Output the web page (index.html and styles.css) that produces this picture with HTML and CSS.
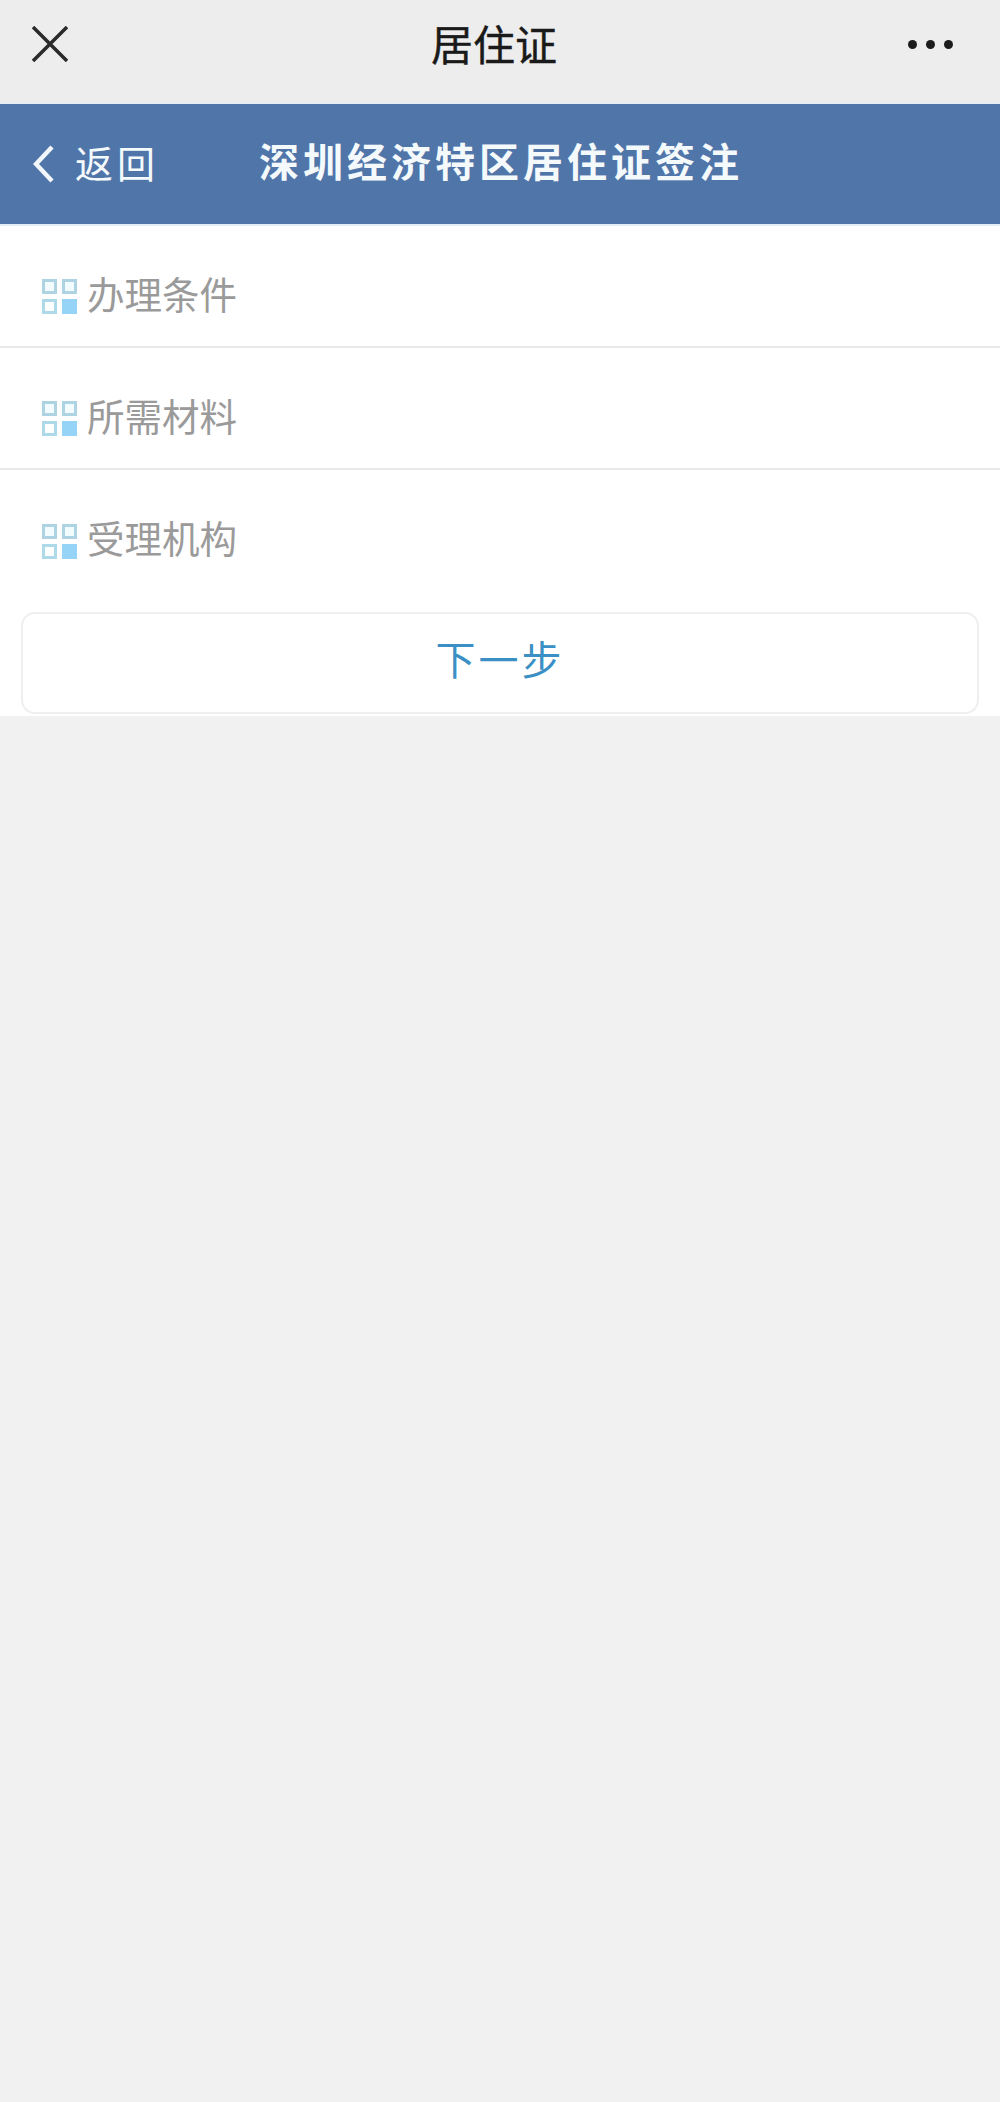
FILE: index.html
```html
<!DOCTYPE html>
<html>
  <head>
    <meta http-equiv="Content-Type" content="text/html;charset=UTF-8">
    <title>居住证</title>
    <link rel="stylesheet" href="styles.css">
  </head>
  <body>
    <!-- 微信顶栏 -->
    <div class="topbar">
      <svg class="close" viewBox="0 0 36 36" width="36" height="36">
        <path d="M1 1L35 35M35 1L1 35" stroke="#2a2a2a" stroke-width="3.5" fill="none"/>
      </svg>
      <div class="toptitle">居住证</div>
      <div class="more"><i></i><i></i><i></i></div>
    </div>
    <!-- 蓝色标题栏 -->
    <div class="header">
      <div class="back">
        <svg viewBox="0 0 22 38" width="22" height="38">
          <path d="M19 2L3 19L19 36" stroke="#f2f7fb" stroke-width="4.5" fill="none"/>
        </svg>
        <span>返回</span>
      </div>
      <div class="title">深圳经济特区居住证签注</div>
    </div>
    <div class="panel">
      <div class="row">
        <svg class="icon" viewBox="0 0 36 36" width="36" height="36"><use href="#grid"/></svg>
        <span>办理条件</span>
      </div>
      <div class="row">
        <svg class="icon" viewBox="0 0 36 36" width="36" height="36"><use href="#grid"/></svg>
        <span>所需材料</span>
      </div>
      <div class="row last">
        <svg class="icon" viewBox="0 0 36 36" width="36" height="36"><use href="#grid"/></svg>
        <span>受理机构</span>
      </div>
      <div class="btn">下一步</div>
    </div>
    <svg class="defs" width="0" height="0">
      <g id="grid">
        <rect x="1.5" y="1.5" width="12" height="12" fill="#f2fbfe" stroke="#aed3e2" stroke-width="3"/>
        <rect x="21.5" y="1.5" width="12" height="12" fill="#f2fbfe" stroke="#aed3e2" stroke-width="3"/>
        <rect x="1.5" y="21.5" width="12" height="12" fill="#fdfefe" stroke="#aed9e8" stroke-width="3"/>
        <rect x="20" y="20" width="15" height="15" fill="#95d3f7"/>
      </g>
    </svg>
  </body>
</html>
```

FILE: styles.css
```css
* {
  box-sizing: border-box;
}
body {
  margin: 0;
  background: #f1f1f1;
  font-family: "Liberation Sans", "Noto Sans CJK SC", sans-serif;
}
.topbar {
  height: 104px;
  background: #ededed;
  border-bottom: 1px solid #e4ecf4;
  display: flex;
  align-items: center;
  justify-content: space-between;
  padding: 0 47px 15px 32px;
}
.close {
  display: block;
}
.toptitle {
  font-size: 42px;
  color: #1a1a1a;
  line-height: 56px;
  margin: 6px 0 0 12px;
  -webkit-text-stroke: 0.4px #1a1a1a;
}
.more {
  display: flex;
  gap: 9px;
}
.more i {
  width: 9px;
  height: 9px;
  border-radius: 50%;
  background: #1c1c1c;
}
.header {
  height: 122px;
  background: #5075a9;
  border-bottom: 2px solid #e3edf8;
  display: flex;
  align-items: center;
  padding-left: 33px;
  color: #f4f9fc;
}
.back {
  width: 226px;
  display: flex;
  align-items: center;
  font-size: 38px;
  letter-spacing: 4px;
}
.back span {
  margin: 0 0 6px 20px;
}
.title {
  font-size: 40px;
  font-weight: bold;
  letter-spacing: 4px;
  margin-bottom: 8px;
}
.panel {
  background: #fff;
  height: 490px;
}
.row {
  height: 122px;
  border-bottom: 2px solid #e8e8e8;
  display: flex;
  align-items: center;
  padding: 12px 0 0 42px;
  font-size: 37.5px;
  color: #9a9a9a;
}
.row .icon {
  margin-top: 10px;
}
.row span {
  margin-left: 9px;
}
.row.last {
  height: 121px;
  border-bottom: none;
}
.btn {
  height: 102px;
  margin: 21px 21px 0;
  border: 2px solid #efefef;
  border-radius: 14px;
  display: flex;
  align-items: center;
  justify-content: center;
  padding-bottom: 10px;
  font-size: 40px;
  letter-spacing: 3px;
  color: #3a90c4;
}
.defs {
  display: block;
}
```
